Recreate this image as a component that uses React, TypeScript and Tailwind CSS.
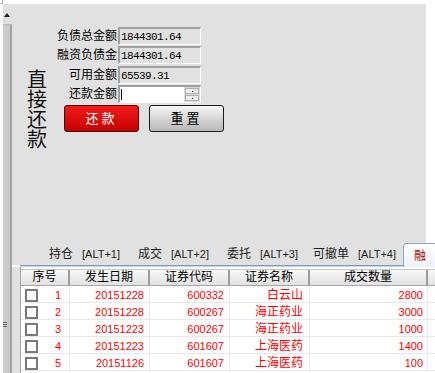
import React from "react";

const sans = "font-['Liberation_Sans','Noto_Sans_CJK_SC',sans-serif]";
const mono = "font-['Liberation_Mono','Noto_Sans_CJK_SC',monospace]";

const fields = [
  { label: "负债总金额", value: "1844301.64", mt: "mt-0" },
  { label: "融资负债金", value: "1844301.64", mt: "mt-[1px]" },
  { label: "可用金额", value: "65539.31", mt: "mt-[2px]" },
];

const tabs = [
  { name: "持仓", key: "[ALT+1]", w: "w-[89px]" },
  { name: "成交", key: "[ALT+2]", w: "w-[89px]" },
  { name: "委托", key: "[ALT+3]", w: "w-[86px]" },
  { name: "可撤单", key: "[ALT+4]", w: "w-[90px]" },
];

const rows = [
  { no: 1, date: "20151228", code: "600332", name: "白云山", qty: "2800" },
  { no: 2, date: "20151228", code: "600267", name: "海正药业", qty: "3000" },
  { no: 3, date: "20151223", code: "600267", name: "海正药业", qty: "1000" },
  { no: 4, date: "20151223", code: "601607", name: "上海医药", qty: "1400" },
  { no: 5, date: "20151126", code: "601607", name: "上海医药", qty: "100" },
];

const cols = "grid grid-cols-[49px_80px_80px_80px_118px_1fr]";

const App: React.FC = () => {
  return (
    <div className={`relative flex h-[373px] w-[435px] overflow-hidden bg-white ${sans}`}>
      {/* corner frame */}
      <div className="w-[3px]">
        <div className="h-[4px] border-r border-b border-[#b4b4b4]" />
      </div>

      {/* left scroll bar */}
      <div className="mt-[4px] flex w-[9px] flex-col">
        <div className="h-[20px] bg-[#e1e1e1] pt-[9px] pl-[1px]">
          <div className="h-0 w-0 border-x-[3px] border-b-[4px] border-x-transparent border-b-[#202020]" />
        </div>
        <div className="flex flex-1 flex-col border-t border-r-2 border-t-[#b8b8b8] border-r-[#a2a2a2] bg-gradient-to-r from-[#d2d2d2] to-[#c6c6c6]">
          <div className="mt-[297px] flex flex-col gap-[1px]">
            <div className="h-[1px] w-[4px] bg-[#606060]" />
            <div className="h-[1px] w-[4px] bg-[#606060]" />
            <div className="h-[1px] w-[4px] bg-[#606060]" />
          </div>
        </div>
      </div>

      {/* content */}
      <div className="relative mt-[4px] flex flex-1 flex-col">
        <div className="flex h-[261px] w-[414px] flex-col bg-[#e1e1e1]">
          <div className="flex flex-1 items-start pl-[15px]">
            <div className="mt-[66px] flex w-[20px] flex-col text-[20px] leading-[20px] text-[#111]">
              <span>直</span>
              <span>接</span>
              <span>还</span>
              <span>款</span>
            </div>

            <div className="ml-[10px] mt-[23px] flex flex-col">
              {fields.map((f) => (
                <div key={f.label} className={`flex h-[18px] items-center ${f.mt}`}>
                  <span className="w-[60px] text-right text-[12px] leading-[18px] text-black">{f.label}</span>
                  <div className="ml-[1px] flex h-[18px] w-[83px] items-center border-t-2 border-l-2 border-r border-b border-t-[#a0a0a0] border-l-[#a0a0a0] border-r-white border-b-white bg-[#e1e1e1] pl-[1px]">
                    <span className={`${mono} text-[11px] leading-[14px] tracking-[-0.6px] text-black`}>{f.value}</span>
                  </div>
                </div>
              ))}
              <div className="mt-[1px] flex h-[18px] items-center">
                <span className="w-[60px] text-right text-[12px] leading-[18px] text-black">还款金额</span>
                <div className="ml-[1px] flex h-[18px] w-[83px] border-t-2 border-l-2 border-r border-b border-t-[#a0a0a0] border-l-[#a0a0a0] border-r-white border-b-white bg-white">
                  <div className="flex flex-1 items-center pl-[1px]">
                    <div className="h-[11px] w-[1px] bg-black" />
                  </div>
                  <div className="flex w-[16px] flex-col gap-[1px] bg-[#d8d8d8] p-[1px]">
                    <div className="flex flex-1 items-center justify-center border border-[#b0b0b0] bg-[#ececec]">
                      <div className="h-[1px] w-[1px] bg-[#404040]" />
                    </div>
                    <div className="flex flex-1 items-center justify-center border border-[#b0b0b0] bg-[#ececec]">
                      <div className="h-[1px] w-[1px] bg-[#404040]" />
                    </div>
                  </div>
                </div>
              </div>

              <div className="mt-[2px] flex gap-[10px] pl-[7px]">
                <button className="flex h-[27px] w-[75px] items-center justify-center rounded-[3px] border border-[#4a0000] bg-gradient-to-b from-[#f41a1a] to-[#c40000] text-[13px] tracking-[3px] text-white">
                  还款
                </button>
                <button className="flex h-[27px] w-[75px] items-center justify-center rounded-[3px] border border-[#1c1c1c] bg-gradient-to-b from-[#f6f6f6] to-[#b8b8b8] text-[13px] tracking-[3px] text-black">
                  重置
                </button>
              </div>
            </div>
          </div>

          {/* tab labels */}
          <div className="flex h-[22px] items-center pl-[37px] text-[#1e1e1e]">
            {tabs.map((t) => (
              <div key={t.name} className={`flex items-center ${t.w}`}>
                <span className="text-[12px] leading-[16px]">{t.name}</span>
                <span className="ml-[9px] text-[11px] leading-[16px]">{t.key}</span>
              </div>
            ))}
          </div>
        </div>

        {/* active tab */}
        <div className="absolute left-[391px] top-[239px] flex h-[24px] w-[50px] items-center rounded-tl-[4px] border-t border-l border-[#8ea8cc] bg-gradient-to-b from-white to-[#eef2f8] pl-[10px] text-[12px] text-[#b00000]">
          融
        </div>

        <div className="ml-[8px] h-[2px] border-t border-[#7b9bc8] bg-[#c6d5ea]" />

        <div className="flex flex-1">
          <div className="w-[8px] bg-[#e1e1e1]" />
          <div className="flex flex-1 flex-col border-l border-[#a6a6a6] bg-white pt-[2px]">
            <div className={`${cols} h-[17px] border-t border-b border-t-[#c8c8c8] border-b-[#a8a8a8] bg-gradient-to-b from-[#f8f8f8] to-[#e2e2e2] text-[12px] leading-[15px] text-black`}>
              <div className="border-r-2 border-[#9a9a9a] text-center">序号</div>
              <div className="border-r-2 border-[#9a9a9a] text-center">发生日期</div>
              <div className="border-r-2 border-[#9a9a9a] text-center">证券代码</div>
              <div className="border-r-2 border-[#9a9a9a] text-center">证券名称</div>
              <div className="border-r-2 border-[#9a9a9a] text-center">成交数量</div>
              <div />
            </div>
            {rows.map((r) => (
              <div key={r.no} className={`${cols} h-[17px] border-b border-[#e8e8e8] text-[#ff0000]`}>
                <div className="flex items-center justify-between border-r border-[#e8e8e8] pl-[4px] pr-[8px]">
                  <div className="h-[13px] w-[13px] border-2 border-[#7a7a7a] bg-white" />
                  <span className="text-[11px]">{r.no}</span>
                </div>
                <div className="flex items-center justify-end border-r border-[#e8e8e8] pr-[5px] text-[11px]">{r.date}</div>
                <div className="flex items-center justify-end border-r border-[#e8e8e8] pr-[5px] text-[11px]">{r.code}</div>
                <div className="flex items-center justify-end border-r border-[#e8e8e8] pr-[6px] text-[12px]">{r.name}</div>
                <div className="flex items-center justify-end border-r border-[#e8e8e8] pr-[4px] text-[11px]">{r.qty}</div>
                <div />
              </div>
            ))}
          </div>
        </div>
      </div>
    </div>
  );
};

export default App;
